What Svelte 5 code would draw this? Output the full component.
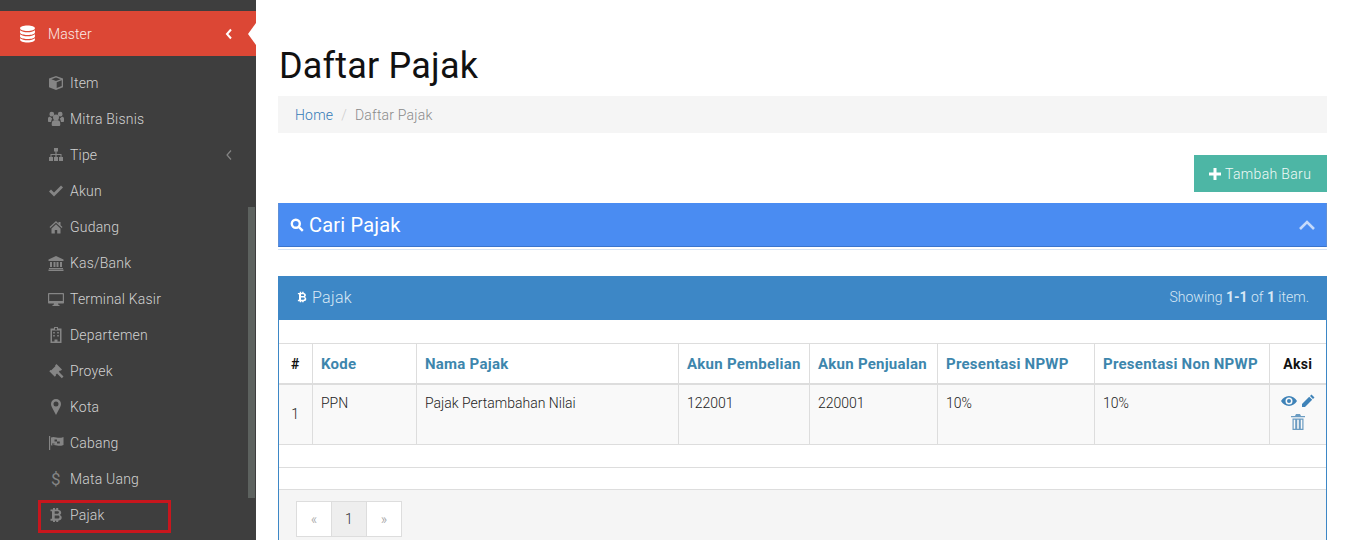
<script>
  const icons = {
    cube: 'M8 1 1 3.600v8.600L8 15l7-2.800V3.600L8 1zM8 2.600l4.600 1.700L8 6 3.400 4.300 8 2.600zM8.700 13V7.200l5-1.900v5.800l-5 1.900z',
    users: 'M3.800.8a2.400 2.400 0 1 1 0 4.800 2.400 2.400 0 0 1 0-4.800zm8.400 0a2.400 2.400 0 1 1 0 4.800 2.400 2.400 0 0 1 0-4.800zM8 3.500a3 3 0 1 1 0 6 3 3 0 0 1 0-6zM0 7.500c0-1.300.8-1.800 2.300-1.800.5.800 1.100 1.500 2 1.900-.7.800-1.100 2-1.200 3.400H.8c-.5 0-.8-.3-.8-.8V7.500zm16 0v2.700c0 .5-.3.800-.8.800h-2.300c-.1-1.400-.5-2.600-1.200-3.400.9-.4 1.500-1.100 2-1.900 1.500 0 2.300.5 2.300 1.800zM4.500 10c.5-.6 1.300-.8 2-.8h3c.7 0 1.500.2 2 .8.600.7.800 2 .8 3.400 0 1-.5 1.600-1.300 1.600H5c-.8 0-1.300-.6-1.300-1.600 0-1.400.2-2.700.8-3.400z',
    sitemap: 'M6 1h4v3.500H8.600V7H13.500v3H15v4h-4v-4h1.500V8H8.600v2H10v4H6v-4h1.400V8H3.500v2H5v4H1v-4h1.500V7h4.900V4.500H6z',
    check: 'M1 8.500 3 6.500l3 3L13 2.500l2 2-9 9z',
    home: 'M8 2 1.500 8l.8 1L8 3.800 13.700 9l.8-1L12.500 6.200V3h-2v1.400zM3.500 9.500V14.500h3.300v-3.500h2.400v3.500h3.300V9.500L8 5.300z',
    bank: 'M8 1 .5 4.500V6h15V4.500zM2 7h2v5H2zm3.500 0h2v5h-2zm3 0h2v5h-2zM12 7h2v5h-2zM1 13h14v1H1zM.5 14.500h15V16H.5z',
    desktop: 'M1 2h14c.6 0 1 .4 1 1v8.500c0 .6-.4 1-1 1H10l.5 1.500h1v1h-7v-1h1l.5-1.500H1c-.6 0-1-.4-1-1V3c0-.6.4-1 1-1zm.2 1.200v6.800h13.600V3.200z',
    dept: 'M6 0h4v1.500h3.500V16h-11V1.500H6zM7 1v1.800h2V1zM4 3.500V14.500h2.500v-2h3v2H12V3.500zM5.200 5h1.600v1.500H5.200zm4 0h1.600v1.500H9.200zM5.200 8h1.600v1.500H5.200zm4 0h1.600v1.500H9.200z',
    gavel: 'M8.500 1 14 6.500 12.800 7.700 12 7.500 10.800 8.700 15.500 13.500 13.800 15.200 9 10.500 7.800 11.700 8 12.500 6.800 13.700 1.300 8.200 2.500 7 3.300 7.200 7.300 3.200 7.100 2.400z',
    marker: 'M8 0a5 5 0 0 0-5 5c0 1.200.3 2 .8 3L8 16l4.200-8c.5-1 .8-1.800.8-3a5 5 0 0 0-5-5zm0 7.500a2.500 2.500 0 1 1 0-5 2.500 2.500 0 0 1 0 5z',
    flag: 'M1 1h1.200v14H1zM3 2.500c2-1 3.500-.5 5.500 0s4.500.5 7-.5v8c-2.500 1-5 1-6.500.5s-4-1-6 0zM6.500 4.500v2h2.500v-2zm2.500 2v2h2.800v-2zm-2.500 2H4v1.200l2.500-.3z',
    bitcoin: 'M5 1h2v1.600h1.200V1h2v1.800c2 .4 3 1.500 3 3 0 1-.5 1.800-1.400 2.200 1.200.4 1.900 1.300 1.900 2.600 0 1.900-1.300 2.900-3.500 3.100V15h-2v-1.200H7V15H5v-1.200H2.500v-2H4V4.200H2.500V2.600H5zm1.700 3.300v2.500h3c.8 0 1.200-.5 1.200-1.200 0-.8-.4-1.300-1.200-1.300zm0 4.300v3h3.300c1 0 1.500-.6 1.500-1.500s-.5-1.500-1.500-1.500z',
  };
  const menu = [
    { label: 'Item', icon: 'cube' },
    { label: 'Mitra Bisnis', icon: 'users' },
    { label: 'Tipe', icon: 'sitemap', sub: true },
    { label: 'Akun', icon: 'check' },
    { label: 'Gudang', icon: 'home' },
    { label: 'Kas/Bank', icon: 'bank' },
    { label: 'Terminal Kasir', icon: 'desktop' },
    { label: 'Departemen', icon: 'dept' },
    { label: 'Proyek', icon: 'gavel' },
    { label: 'Kota', icon: 'marker' },
    { label: 'Cabang', icon: 'flag' },
    { label: 'Mata Uang', glyph: '$' },
    { label: 'Pajak', icon: 'bitcoin', marked: true },
  ];
  const columns = [
    { label: '#', width: 33 },
    { label: 'Kode', width: 104, link: true },
    { label: 'Nama Pajak', width: 262, link: true },
    { label: 'Akun Pembelian', width: 131, link: true },
    { label: 'Akun Penjualan', width: 128, link: true },
    { label: 'Presentasi NPWP', width: 157, link: true },
    { label: 'Presentasi Non NPWP', width: 175, link: true },
    { label: 'Aksi', width: 57 },
  ];
  const row = ['PPN', 'Pajak Pertambahan Nilai', '122001', '220001', '10%', '10%'];
</script>

<div class="page">
  <aside class="sidebar">
    <div class="master">
      <svg class="db" viewBox="0 0 16 16" aria-hidden="true">
        <path d="M8 0c4 0 7 1 7 2.600S12 5.200 8 5.200 1 4.200 1 2.600 4 0 8 0zM1 4.400c1.300 1.200 4 1.900 7 1.900s5.700-.7 7-1.900v2.200C15 8 12 9 8 9S1 8 1 6.600zM1 8.200c1.300 1.200 4 1.900 7 1.900s5.700-.7 7-1.900v2.200c0 1.400-3 2.400-7 2.400s-7-1-7-2.400zM1 12c1.300 1.200 4 1.900 7 1.900s5.700-.7 7-1.900v1.400C15 14.900 12 16 8 16s-7-1.100-7-2.600z" />
      </svg>
      <span class="master-label">Master</span>
      <svg class="chev" viewBox="0 0 8 12" aria-hidden="true"><path d="M6 1.500 2 6l4 4.500" /></svg>
      <span class="notch"></span>
    </div>
    <ul class="menu">
      {#each menu as item}
        <li class:marked={item.marked}>
          <span class="ico">
            {#if item.icon}
              <svg viewBox="0 0 16 16" aria-hidden="true"><path d={icons[item.icon]} fill-rule="evenodd" /></svg>
            {:else}
              <b>{item.glyph}</b>
            {/if}
          </span>
          <span>{item.label}</span>
          {#if item.sub}
            <svg class="sub" viewBox="0 0 8 12" aria-hidden="true"><path d="M6 1.500 2 6l4 4.500" /></svg>
          {/if}
        </li>
      {/each}
    </ul>
    <div class="scrollbar"></div>
  </aside>

  <main class="content">
    <h1>Daftar Pajak</h1>
    <nav class="crumb"><a href="#home">Home</a><i>/</i><span>Daftar Pajak</span></nav>
    <div class="actions">
      <button class="add">
        <svg viewBox="0 0 12 12" aria-hidden="true"><path d="M4.500 0h3v4.500H12v3H7.500V12h-3V7.500H0v-3h4.500z" /></svg>
        Tambah Baru
      </button>
    </div>

    <section class="search">
      <div class="search-bar">
        <svg viewBox="0 0 14 14" aria-hidden="true"><circle cx="5.800" cy="5.800" r="4" /><path d="m8.800 8.800 4 4" /></svg>
        <span>Cari Pajak</span>
        <svg class="up" viewBox="0 0 18 12" aria-hidden="true"><path d="M2 10 9 3l7 7" /></svg>
      </div>
    </section>

    <section class="panel">
      <header class="panel-head">
        <span class="title">
          <svg viewBox="0 0 16 16" aria-hidden="true"><path d={icons.bitcoin} fill-rule="evenodd" /></svg>
          Pajak
        </span>
        <span class="summary">Showing <b>1-1</b> of <b>1</b> item.</span>
      </header>
      <div class="panel-gap"></div>
      <table>
        <colgroup>
          {#each columns as col}<col style="width:{col.width}px" />{/each}
        </colgroup>
        <thead>
          <tr>
            {#each columns as col}
              <th class:link={col.link}>{col.label}</th>
            {/each}
          </tr>
        </thead>
        <tbody>
          <tr>
            <td class="num">1</td>
            {#each row as cell}<td>{cell}</td>{/each}
            <td class="aksi">
              <div class="row-icons">
                <svg viewBox="0 0 16 12" width="16" height="12" aria-hidden="true"><path d="M8 1C4.500 1 1.700 3.200 0 6c1.700 2.800 4.500 5 8 5s6.300-2.200 8-5c-1.700-2.800-4.500-5-8-5zm0 8.500a3.500 3.500 0 1 1 0-7 3.500 3.500 0 0 1 0 7zM8 4a2 2 0 1 0 0 4 2 2 0 0 0 0-4z" /></svg>
                <svg viewBox="0 0 14 14" width="14" height="14" aria-hidden="true"><path d="M10.500.5 13.500 3.500 12 5 9 2zM8.200 2.800l3 3L4 13H1v-3z" /></svg>
              </div>
              <svg class="trash" viewBox="0 0 14 16" width="14" height="16" aria-hidden="true"><path d="M5 0h4l1 2h4v1.200H0V2h4zM1.500 4.500h11V16h-11zM2.700 5.700v9.100h1.500V5.700zm3.500 0v9.100h1.600V5.700zm3.600 0v9.100h1.500V5.700z" fill-rule="evenodd" /></svg>
            </td>
          </tr>
        </tbody>
      </table>
      <div class="spacer"></div>
      <div class="spacer small"></div>
      <footer class="panel-foot">
        <div class="pager">
          <span class="off">«</span>
          <span class="on">1</span>
          <span class="off">»</span>
        </div>
      </footer>
    </section>
  </main>
</div>

<style>
  :global(body) {
    margin: 0;
    background: #fff;
    overflow: hidden;
  }
  .page {
    display: flex;
    height: 540px;
    overflow: hidden;
    font-family: Roboto, "Liberation Sans", sans-serif;
    font-size: 14px;
    color: #333;
  }
  .sidebar {
    position: relative;
    flex: 0 0 256px;
    background: #3e3e3e;
    padding-top: 11px;
    box-sizing: border-box;
  }
  .master {
    position: relative;
    display: flex;
    align-items: center;
    height: 45px;
    padding-left: 19px;
    background: #dc4735;
    color: #fff;
    box-sizing: border-box;
  }
  .db {
    width: 17px;
    height: 18px;
    fill: #fff;
    margin-right: 12px;
  }
  .master-label {
    font-size: 14px;
    font-weight: 300;
    letter-spacing: 0.1px;
    color: #fbeae6;
  }
  .chev {
    position: absolute;
    left: 225px;
    top: 17px;
    width: 8px;
    height: 12px;
    fill: none;
    stroke: #fff;
    stroke-width: 2;
  }
  .notch {
    position: absolute;
    right: 0;
    top: 12px;
    border-style: solid;
    border-width: 11px 8px 11px 0;
    border-color: transparent #fff transparent transparent;
  }
  .menu {
    list-style: none;
    margin: 9px 0 0;
    padding: 0 0 0 47px;
  }
  .menu li {
    position: relative;
    display: flex;
    align-items: center;
    height: 36px;
    color: #d2d2d2;
    font-size: 14px;
    font-weight: 300;
    letter-spacing: 0.2px;
  }
  .ico {
    display: flex;
    justify-content: center;
    width: 18px;
    margin-right: 5px;
    color: #858585;
  }
  .ico svg {
    width: 16px;
    height: 16px;
    fill: #858585;
  }
  .ico b {
    font: 400 17px Roboto, sans-serif;
  }
  .sub {
    position: absolute;
    left: 178px;
    top: 12px;
    width: 8px;
    height: 12px;
    fill: none;
    stroke: #858585;
    stroke-width: 1.200;
  }
  .marked::before {
    content: '';
    position: absolute;
    left: -9px;
    top: 3px;
    width: 133px;
    height: 33px;
    border: 3px solid #c8161d;
    box-sizing: border-box;
  }
  .scrollbar {
    position: absolute;
    left: 248px;
    top: 207px;
    width: 7px;
    height: 291px;
    background: #5d625f;
  }
  .content {
    flex: 1;
    min-width: 0;
    padding: 0 19px 0 22px;
  }
  h1 {
    margin: 44px 0 0;
    font-size: 36px;
    font-weight: 400;
    line-height: 44px;
    color: #111;
    letter-spacing: 0.2px;
    padding-left: 1px;
  }
  .crumb {
    display: flex;
    align-items: center;
    height: 37px;
    margin-top: 8px;
    padding-left: 17px;
    background: #f5f5f5;
    color: #8a8a8a;
    font-size: 14px;
    font-weight: 300;
    letter-spacing: 0.2px;
  }
  .crumb a {
    color: #337ab7;
    text-decoration: none;
  }
  .crumb i {
    font-style: normal;
    color: #ccc;
    margin: 0 8px;
  }
  .actions {
    display: flex;
    justify-content: flex-end;
    margin-top: 22px;
  }
  .add {
    display: flex;
    align-items: center;
    gap: 4px;
    height: 37px;
    width: 133px;
    padding: 0 0 0 15px;
    border: 0;
    background: #4db6a5;
    color: #f0faf7;
    font: 300 14px Roboto, "Liberation Sans", sans-serif;
    letter-spacing: 0.35px;
    box-sizing: border-box;
  }
  .add svg {
    width: 12px;
    height: 12px;
    fill: #fff;
  }
  .search {
    margin-top: 11px;
    padding-bottom: 2px;
    border-bottom: 1px solid #d6e4f5;
  }
  .search-bar {
    display: flex;
    align-items: center;
    height: 43px;
    padding: 0 10px 0 11px;
    background: #4a8cf2;
    border-left: 1px solid #5f8fd6;
    border-right: 1px solid #5f8fd6;
    border-bottom: 1px solid #3a74cc;
    color: #fff;
    font-size: 20px;
    letter-spacing: 0.2px;
  }
  .search-bar svg {
    width: 14px;
    height: 14px;
    fill: none;
    stroke: #fff;
    stroke-width: 2.400;
    margin-right: 5px;
  }
  .search-bar .up {
    width: 18px;
    height: 12px;
    margin: 0 0 0 auto;
    stroke: #c5dafb;
    stroke-width: 2.600;
  }
  .panel {
    margin-top: 26px;
    border: 1px solid #3d87c6;
    border-bottom: 0;
  }
  .panel-head {
    display: flex;
    align-items: center;
    justify-content: space-between;
    height: 43px;
    padding: 0 17px;
    background: #3d87c6;
    color: #d8e8f5;
  }
  .title {
    display: flex;
    align-items: center;
    gap: 4px;
    font-size: 16px;
    font-weight: 300;
    letter-spacing: 0.3px;
    margin-top: -3px;
  }
  .title svg {
    width: 12px;
    height: 12px;
    fill: #fff;
  }
  .summary {
    font-size: 14px;
    font-weight: 300;
    margin-top: -3px;
  }
  .summary b {
    font-weight: 700;
  }
  .panel-gap {
    height: 23px;
  }
  table {
    width: 100%;
    table-layout: fixed;
    border-collapse: collapse;
    font-size: 14px;
  }
  th, td {
    border: 1px solid #ddd;
    padding: 8px 8px 8px 8.500px;
    text-align: left;
    vertical-align: top;
    overflow: hidden;
    white-space: nowrap;
  }
  th:first-child, td:first-child {
    border-left: 0;
  }
  th:last-child, td:last-child {
    border-right: 0;
  }
  th {
    height: 40px;
    border-bottom-width: 2px;
    box-sizing: border-box;
    padding: 10px 0 8px 8.500px;
    vertical-align: middle;
    color: #111;
    font-size: 15px;
    font-weight: 700;
    letter-spacing: 0.25px;
    text-align: center;
  }
  th.link {
    color: #3d86ad;
    text-align: left;
  }
  th:first-child,
  th:last-child {
    font-size: 14px;
    padding-left: 0;
  }
  tbody tr {
    height: 61px;
    background: #f9f9f9;
  }
  td {
    color: #222;
    font-weight: 300;
    line-height: 20px;
  }
  td.num {
    vertical-align: middle;
    text-align: center;
    padding: 0;
  }
  td.aksi {
    padding: 8px 0 0;
    text-align: center;
  }
  .row-icons {
    display: flex;
    justify-content: center;
    align-items: center;
    gap: 4px;
    height: 16px;
  }
  .aksi svg {
    fill: #3f83b8;
  }
  .aksi .trash {
    display: block;
    margin: 5px auto 0;
    fill: #6b9cc2;
  }
  .spacer {
    height: 22px;
    border-bottom: 1px solid #ddd;
  }
  .spacer.small {
    height: 21px;
  }
  .panel-foot {
    height: 51px;
    padding: 11px 17px 0;
    background: #f5f5f5;
    box-sizing: border-box;
  }
  .pager {
    display: flex;
    font-weight: 300;
  }
  .pager span {
    display: flex;
    align-items: center;
    justify-content: center;
    width: 36px;
    height: 36px;
    margin-left: -1px;
    border: 1px solid #ddd;
    background: #fff;
    box-sizing: border-box;
  }
  .pager span:first-child {
    margin-left: 0;
  }
  .pager .off {
    color: #999;
  }
  .pager .on {
    background: #eee;
    color: #333;
  }
</style>
